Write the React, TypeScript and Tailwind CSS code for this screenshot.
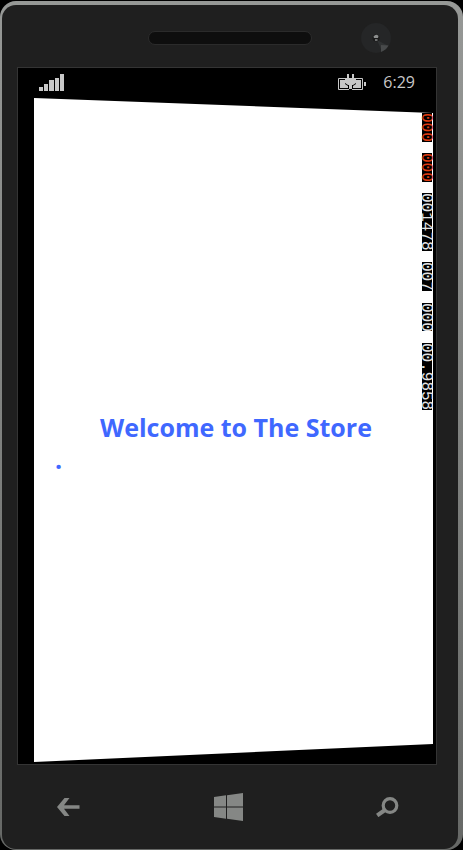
const counters = [
  { label: "Composition frame rate", value: "000", color: "text-[#e03c10]" },
  { label: "UI frame rate", value: "000", color: "text-[#e03c10]" },
  { label: "Texture memory", value: "001478", color: "text-[#e4e4e4]" },
  { label: "Surface count", value: "007", color: "text-[#e4e4e4]" },
  { label: "Intermediate surfaces", value: "000", color: "text-[#e4e4e4]" },
  { label: "Fill rate", value: "00.9858", color: "text-[#e4e4e4]" },
];

function PhoneTop() {
  return (
    <header className="grid h-[62px] grid-cols-[1fr_164px_1fr] items-center">
      <div className="col-start-2 mt-1 h-[14px] rounded-full border border-[#2b2b2b] bg-[#0e0e0e]" />
      <svg className="mt-1 ml-[49px] size-[30px]" viewBox="0 0 30 30" aria-hidden="true">
        <circle cx="15" cy="15" r="15" fill="#252627" />
        <path d="M16 17 L27.5 23 A15 15 0 0 1 21 28.5 Z" fill="#303233" />
        <path d="M20 22 L27.500 22.500 A15 15 0 0 1 20 29 Z" fill="#484a4b" />
        <circle cx="15" cy="15" r="3.5" fill="#1b1b1b" />
        <path d="M12.5 13.5 Q15 10.5 17.5 13 L17 15 L13 15 Z" fill="#8c8e8e" />
        <path d="M14 16h2.500v2h-2.500z" fill="#6c6e6e" />
      </svg>
    </header>
  );
}

function StatusBar() {
  return (
    <div className="flex h-[30px] items-center pr-[21px] pb-[2px] pl-[21px] text-[#c8c8c8]">
      <svg className="h-[17px] w-[26px]" viewBox="0 0 26 17" fill="currentColor" aria-label="Signal">
        <path d="M0 13h4v4H0zM5 10h4v7H5zM10 6h5v11h-5zM16 4h4v13h-4zM21 0h4v17h-4z" />
      </svg>
      <svg className="ml-auto h-[16px] w-[29px]" viewBox="0 0 29 16" aria-label="Charging">
        <path d="M9 4.500H.5V15.500H11M16 4.500H24.500V15.500H14" fill="none" stroke="currentColor" />
        <path d="M2 6h5v4l3 2v2H2zM23 6h-5v4l-3 2v2h8z" fill="currentColor" />
        <path d="M26 8h2v4h-2zM9 0h2v4h3V0h2v4h2v5l-3 2h-1v4h-3v-4h-1l-3-2V4h2z" fill="currentColor" />
      </svg>
      <time className="ml-4 font-['Open_Sans',sans-serif] text-[16px] leading-[20px]">6:29</time>
    </div>
  );
}

function Screen() {
  return (
    <main className="mr-[21px] ml-[15px] border border-[#343434] bg-black">
      <StatusBar />
      <div className="mr-[3px] mb-[2px] ml-[16px] flex h-[664px] bg-white [clip-path:polygon(0_0,100%_15px,100%_646px,0_100%)]">
        <div className="flex flex-1 flex-col pt-[313px] font-['Open_Sans','Noto_Sans',sans-serif] text-[25px] leading-[32px] font-bold text-[#3f68ff]">
          <h1 className="pl-[16px] text-center">Welcome to The Store</h1>
          <p className="pl-[21px]">.</p>
        </div>
        <div className="mt-[15px] mr-px flex h-[297px] w-[10px] flex-col justify-between font-['Liberation_Mono',monospace] text-[16px] leading-[13px]">
          {counters.map((item) => (
            <span key={item.label} className={`w-[10px] bg-black [writing-mode:vertical-rl] ${item.color}`}>
              {item.value}
            </span>
          ))}
        </div>
      </div>
    </main>
  );
}

function NavigationBar() {
  return (
    <nav className="flex h-[84px] items-center justify-between pr-[59px] pb-px pl-[55px] text-[#858785]">
      <button type="button" aria-label="Back">
        <svg className="h-[18px] w-[23px]" viewBox="0 0 23 18" fill="currentColor">
          <path d="M0 9 7.500 0H12.500L7 7.300H22.500V10.700H7L12.500 18H7.500Z" />
        </svg>
      </button>
      <button type="button" aria-label="Start">
        <svg className="h-[28px] w-[29px]" viewBox="0 0 29 28" fill="currentColor">
          <path d="M0 4 12 2.300V13.500H0ZM13 2.200 29 0V13.500H13ZM0 14.500H12V25.700L0 24ZM13 14.500H29V28L13 25.800Z" />
        </svg>
      </button>
      <button type="button" aria-label="Search">
        <svg className="h-[20px] w-[23px]" viewBox="0 0 23 20" fill="none" stroke="currentColor">
          <circle cx="14" cy="8.500" r="6.800" strokeWidth="3.200" />
          <path d="M9 13 1.200 18.500" strokeWidth="4" />
        </svg>
      </button>
    </nav>
  );
}

export default function App() {
  return (
    <div className="min-h-screen bg-black pt-px">
      <div className="rounded-[16px] bg-linear-to-b from-[#969896] via-[#808280] to-[#666866] pt-1 pr-[5px] pb-px pl-[2px]">
        <div className="rounded-[14px] bg-[#1f1f1f]">
          <PhoneTop />
          <Screen />
          <NavigationBar />
        </div>
      </div>
    </div>
  );
}
